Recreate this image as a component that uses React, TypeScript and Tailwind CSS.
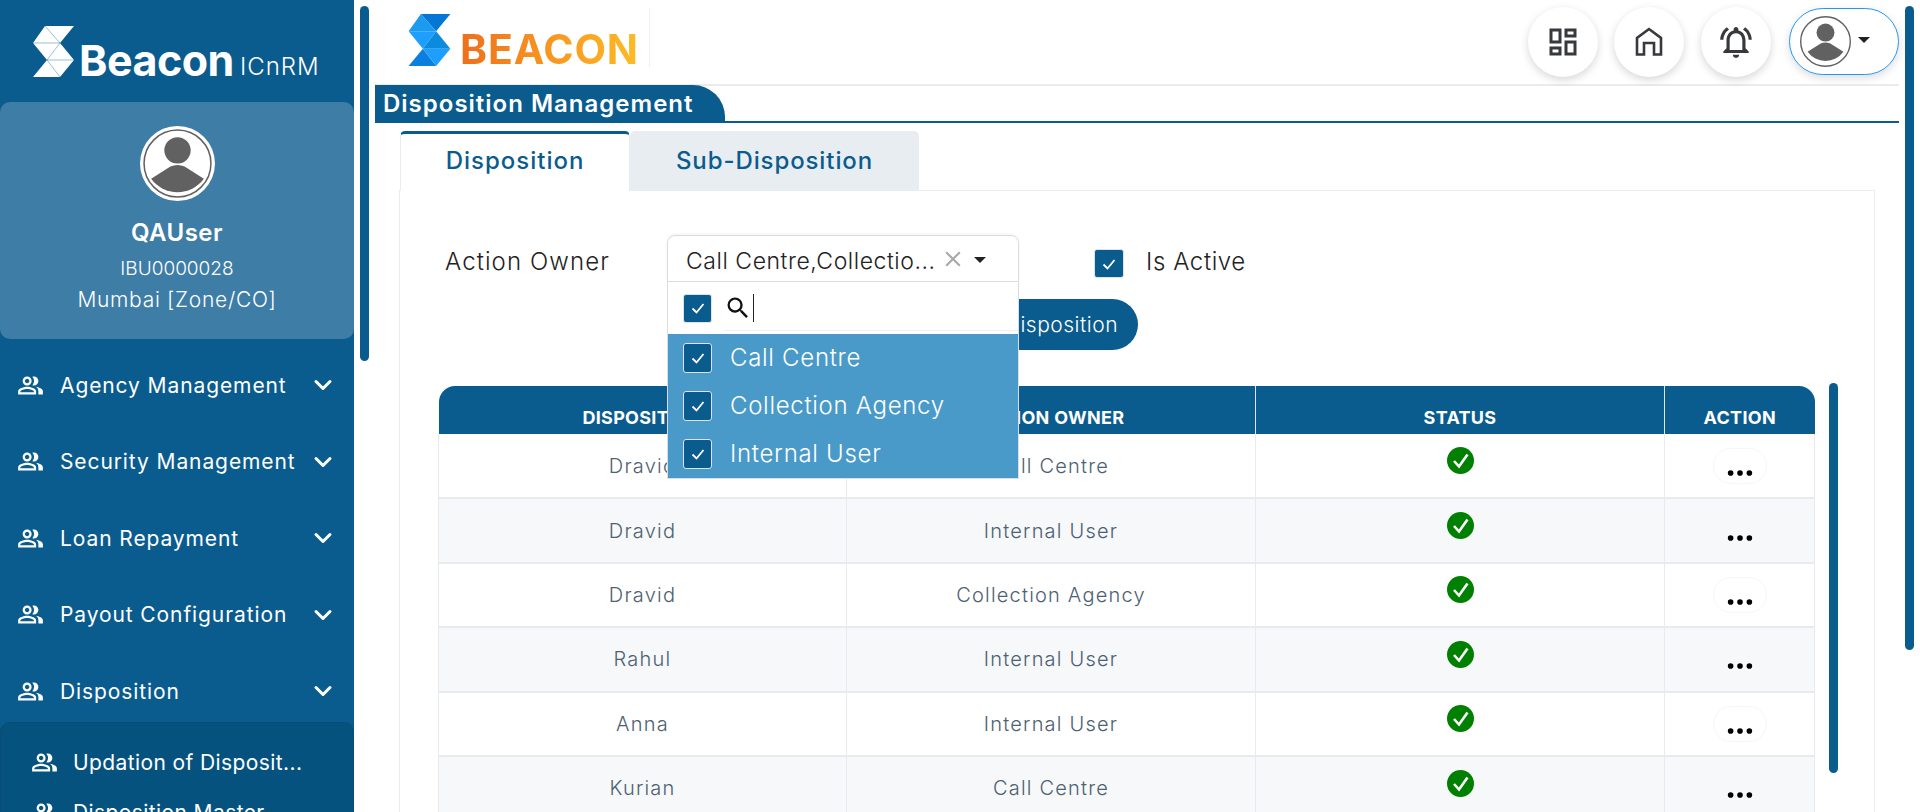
import React from "react";
import { ChevronDown } from "lucide-react";
import { BsThreeDots } from "react-icons/bs";
import {
    MdClose,
    MdOutlineDashboard,
    MdOutlineNotificationsActive,
    MdOutlinePeopleAlt,
    MdSearch,
} from "react-icons/md";

const menu = ["Agency Management", "Security Management", "Loan Repayment", "Payout Configuration", "Disposition"];

const rows = [
    ["Dravid", "Call Centre"],
    ["Dravid", "Internal User"],
    ["Dravid", "Collection Agency"],
    ["Rahul", "Internal User"],
    ["Anna", "Internal User"],
    ["Kurian", "Call Centre"],
];

function Avatar({ size, ring }: { size: number; ring?: boolean }) {
    return (
        <svg width={size} height={size} viewBox="0 0 74 74">
            {ring && <circle cx="37" cy="37" r="37" fill="#fff" />}
            <circle cx="37" cy="37" r={ring ? 33 : 36} fill="#fff" stroke="#616161" strokeWidth={ring ? 1.5 : 2} />
            <circle cx="37" cy="24" r="13" fill="#616161" />
            <path d="M11 52 L30 40 Q37 37 44 40 L63 52 A32 32 0 0 1 11 52 Z" fill="#616161" />
        </svg>
    );
}

function LogoMark({ light }: { light?: boolean }) {
    if (light) {
        return (
            <svg width="41" height="51" viewBox="0 0 41 51" className="shrink-0">
                <polygon points="12,0 41,0 27,17 41,34 27,51 0,51 14,34 0,17" fill="#fff" />
                <path d="M0 17H27M14 34H41M12 0L27 17L14 34L27 51" stroke="#0a5c8e" strokeWidth="0.4" fill="none" />
            </svg>
        );
    }
    return (
        <svg width="43" height="52" viewBox="0 0 41 51" className="shrink-0">
            <polygon points="12,0 41,0 27,17" fill="#0477d6" />
            <polygon points="12,0 27,17 0,17" fill="#1b9bf0" />
            <polygon points="0,17 27,17 14,34" fill="#1e9fff" />
            <polygon points="27,17 41,34 14,34" fill="#0c8bdc" />
            <polygon points="14,34 27,51 0,51" fill="#0b7fdd" />
            <polygon points="14,34 41,34 27,51" fill="#1e9fff" />
        </svg>
    );
}

function Check({ className }: { className: string }) {
    return (
        <span className={`flex shrink-0 items-center justify-center rounded-[3px] border border-[#dbe4ea] bg-[#0a5c8e] ${className}`}>
            <svg width="16" height="16" viewBox="0 0 16 16" fill="none" stroke="#fff" strokeWidth="1.8">
                <path d="M2.5 8.5 L6.5 12.5 L13.5 4" />
            </svg>
        </span>
    );
}

function StatusIcon() {
    return (
        <svg width="27" height="27" viewBox="0 0 27 27" className="mx-auto mb-[10px]">
            <circle cx="13.5" cy="13.5" r="13.5" fill="#008000" />
            <path d="M7 14 L12 19.5 L20.5 7.5" fill="none" stroke="#fff" strokeWidth="2.6" />
        </svg>
    );
}

function RoundButton({ children }: { children: React.ReactNode }) {
    return (
        <div className="flex h-[70px] w-[70px] items-center justify-center rounded-full bg-white text-[#37393d] shadow-[0_3px_8px_rgba(0,0,0,0.16)]">
            {children}
        </div>
    );
}

export default function App() {
    return (
        <div className="relative flex h-[812px] w-[1920px] overflow-hidden bg-white font-['Inter',sans-serif]">
            <aside className="flex w-[354px] shrink-0 flex-col bg-[#0a5c8e] text-white">
                <div className="flex h-[102px] shrink-0 items-start pl-[33px] pt-[26px]">
                    <LogoMark light />
                    <span className="mt-[9px] ml-[5px] text-[43px] leading-[50px] font-bold tracking-[-0.5px]">Beacon</span>
                    <span className="mt-[26px] ml-[6px] text-[24px] leading-[30px] font-light tracking-[1px]">ICnRM</span>
                </div>
                <div className="flex h-[237px] shrink-0 flex-col items-center rounded-[10px] bg-[#3e7da6] pt-[24px]">
                    <Avatar size={75} ring />
                    <div className="mt-[17px] text-[24px] leading-[30px] font-semibold tracking-[0.5px]">QAUser</div>
                    <div className="mt-[8px] text-[19px] leading-[26px] font-light">IBU0000028</div>
                    <div className="mt-[4px] text-[21px] leading-[28px] font-light tracking-[0.7px]">Mumbai [Zone/CO]</div>
                </div>
                <nav className="mt-[8px] shrink-0">
                    {menu.map((item) => (
                        <div key={item} className="flex h-[76.5px] items-center pl-[17px] pr-[17px]">
                            <MdOutlinePeopleAlt size={27} />
                            <span className="ml-[16px] flex-1 text-[21px] tracking-[0.9px]">{item}</span>
                            <ChevronDown size={28} strokeWidth={2.6} />
                        </div>
                    ))}
                </nav>
                <div className="mt-[-8px] flex-1 rounded-t-[10px] border border-[#0a4c74] bg-[#05527f] pt-[15px] pl-[30px]">
                    <div className="flex h-[50px] items-center">
                        <MdOutlinePeopleAlt size={27} />
                        <span className="ml-[15px] text-[21px] tracking-[0.4px]">Updation of Disposit...</span>
                    </div>
                    <div className="flex h-[50px] items-center">
                        <MdOutlinePeopleAlt size={27} />
                        <span className="ml-[15px] text-[21px] tracking-[0.4px]">Disposition Master</span>
                    </div>
                </div>
            </aside>

            <div className="absolute left-[360px] top-[6px] h-[355px] w-[9px] rounded-full bg-[#0a5c8e]" />
            <div className="absolute left-[1905px] top-[6px] h-[644px] w-[9px] rounded-full bg-[#0a5c8e]" />

            <main className="flex-1 pl-[21px] pr-[21px]">
                <header className="flex h-[86px] items-start justify-between border-b-2 border-[#ebebeb]">
                    <div className="ml-[33px] mt-[8px] flex h-[59px] w-[242px] items-start border-r border-[#f0f0f0] pt-[6px]">
                        <LogoMark />
                        <span className="mt-[12px] ml-[9px] bg-gradient-to-r from-[#ee6f1b] to-[#fdbb26] bg-clip-text text-[41px] leading-[46px] font-bold tracking-[0.8px] text-transparent">
                            BEACON
                        </span>
                    </div>
                    <div className="mt-[7px] flex items-start">
                        <RoundButton>
                            <MdOutlineDashboard size={36} />
                        </RoundButton>
                        <div className="ml-[16px]">
                            <RoundButton>
                                <svg width="30" height="32" viewBox="0 0 30 32" fill="none" stroke="#37393d" strokeWidth="2.6">
                                    <path d="M3 28.5V12L15 3L27 12V28.5H20V17H10V28.5Z" />
                                </svg>
                            </RoundButton>
                        </div>
                        <div className="ml-[17px]">
                            <RoundButton>
                                <MdOutlineNotificationsActive size={38} />
                            </RoundButton>
                        </div>
                        <div className="ml-[18px] mt-[1px] flex h-[67px] w-[110px] items-center rounded-[34px] border border-[#2196f3] pl-[10px] shadow-[0_3px_8px_rgba(0,0,0,0.14)]">
                            <Avatar size={51} />
                            <span className="ml-[7px] mb-[3px] h-0 w-0 border-x-[6px] border-t-[6px] border-x-transparent border-t-[#222]" />
                        </div>
                    </div>
                </header>

                <div className="flex h-[37px] items-end border-b-2 border-[#0a5c8e]">
                    <div className="flex h-[36px] w-[350px] items-center rounded-tr-[32px] bg-[#0a5c8e] pl-[8px] pt-[2px] text-[24px] leading-[32px] font-semibold tracking-[1px] text-white">
                        Disposition Management
                    </div>
                </div>

                <div className="ml-[25px] mt-[8px] flex h-[59px]">
                    <div className="z-10 flex h-[60px] w-[230px] items-center justify-center rounded-t-[5px] border-x border-t-[3px] border-x-[#e8edf1] border-t-[#0a5c8e] bg-white pb-[3px] text-[24px] font-medium tracking-[1px] text-[#0a5c8e]">
                        Disposition
                    </div>
                    <div className="flex w-[289px] items-center justify-center rounded-t-[5px] bg-[#e8edf1] text-[24px] font-medium tracking-[0.9px] text-[#0a5c8e]">
                        Sub-Disposition
                    </div>
                </div>

                <section className="ml-[24px] mr-[24px] h-[700px] border border-[#e8edf1] pl-[38px] pt-[44px]">
                    <div className="flex h-[46px] items-start">
                        <span className="ml-[7px] mt-[11px] w-[222px] text-[24px] leading-[32px] font-light tracking-[1.1px] text-[#222]">
                            Action Owner
                        </span>
                        <div className="relative z-10 h-[47px] w-[352px] rounded-t-[8px] border border-[#d9dde0] bg-white shadow-[0_-1px_3px_rgba(0,0,0,0.05)]">
                            <div className="flex h-[46px] items-center pl-[18px] pt-[5px]">
                                <span className="w-[255px] text-[23px] font-light tracking-[0.55px] whitespace-nowrap text-[#222]">
                                    Call Centre,Collectio...
                                </span>
                                <MdClose size={26} className="ml-[-1px] mb-[5px] text-[#a9a9a9]" />
                                <span className="ml-[8px] mb-[4px] h-0 w-0 border-x-[6px] border-t-[6px] border-x-transparent border-t-[#222]" />
                            </div>
                            <div className="absolute left-[-1px] top-[46px] w-[352px] border-x border-b border-[#d9dde0] bg-white">
                                <div className="flex h-[52px] items-center pl-[15px]">
                                    <Check className="h-[29px] w-[29px]" />
                                    <div className="ml-[12px] flex h-[46px] flex-1 items-center border-b border-[#f0f0f0]">
                                        <MdSearch size={28} className="text-[#111]" />
                                        <span className="ml-[1px] h-[28px] w-px bg-[#222]" />
                                    </div>
                                </div>
                                {["Call Centre", "Collection Agency", "Internal User"].map((opt) => (
                                    <div key={opt} className="flex h-[48px] items-center bg-[#499ac8] pl-[15px] text-[24px] font-light tracking-[0.7px] text-white">
                                        <Check className="h-[30px] w-[29px]" />
                                        <span className="ml-[18px]">{opt}</span>
                                    </div>
                                ))}
                            </div>
                        </div>
                        <Check className="ml-[75px] mt-[14px] h-[29px] w-[30px]" />
                        <span className="ml-[22px] mt-[11px] text-[24px] leading-[32px] font-light tracking-[0.6px] text-[#222]">Is Active</span>
                    </div>
                    <div className="ml-[452px] mt-[18px] flex h-[51px] w-[248px] items-center justify-end rounded-full bg-[#0a5c8e] pr-[20px] text-[21px] font-light tracking-[0.5px] text-white">
                        Add Disposition
                    </div>
                    <table className="mt-[36px] w-[1376px] table-fixed border-collapse">
                        <thead>
                            <tr className="h-[48px] text-[18px] font-semibold tracking-[0.3px] text-white">
                                <th className="w-[408px] rounded-tl-[16px] bg-[#0a5c8e] pt-[14px]">DISPOSITION</th>
                                <th className="w-[409px] border-r border-[#dfe7ec] bg-[#0a5c8e] pt-[14px]">ACTION OWNER</th>
                                <th className="w-[409px] border-r border-[#dfe7ec] bg-[#0a5c8e] pt-[14px]">STATUS</th>
                                <th className="w-[150px] rounded-tr-[16px] bg-[#0a5c8e] pt-[14px]">ACTION</th>
                            </tr>
                        </thead>
                        <tbody>
                            {rows.map(([name, owner], i) => (
                                <tr key={i} className={`h-[64.4px] border-b-2 border-[#e6ebef] text-center text-[20px] font-light tracking-[1.2px] text-[#4d6171] ${i % 2 ? "bg-[#f6f8fa]" : "bg-white"}`}>
                                    <td className="border-x border-[#e6ebef]">{name}</td>
                                    <td className="border-r border-[#e6ebef]">{owner}</td>
                                    <td className="border-r border-[#e6ebef]">
                                        <StatusIcon />
                                    </td>
                                    <td className="border-r border-[#e6ebef]">
                                        <div className={`mx-auto flex h-[36px] w-[54px] items-end justify-center rounded-full border text-black ${i % 2 ? "border-transparent" : "border-[#f5f6f7]"}`}>
                                            <BsThreeDots size={30} className="mb-[-5px]" />
                                        </div>
                                    </td>
                                </tr>
                            ))}
                        </tbody>
                    </table>
                </section>
            </main>

            <div className="absolute left-[1829px] top-[383px] h-[390px] w-[9px] rounded-full bg-[#0a5c8e]" />
        </div>
    );
}
